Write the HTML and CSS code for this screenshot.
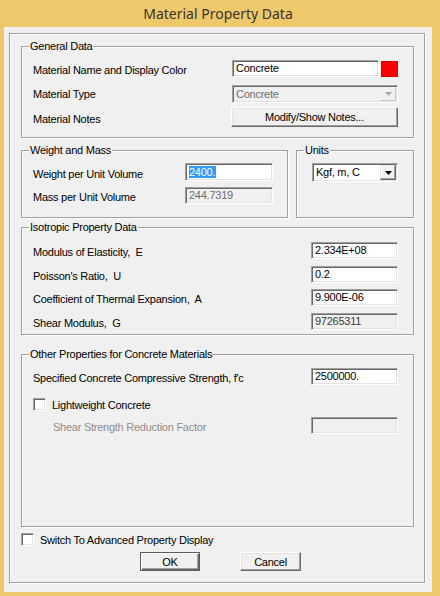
FILE: index.html
```html
<!DOCTYPE html>
<html>
<head>
<meta charset="utf-8">
<title>Material Property Data</title>
<link rel="stylesheet" href="styles.css">
</head>
<body>
<div class="window">
  <div class="titlebar">Material Property Data</div>
  <div class="client">
    <div class="frame">

      <fieldset class="group">
        <legend>General Data</legend>
        <div class="gbody general">
          <div class="row h17 mb8">
            <span class="lbl">Material Name and Display Color</span>
            <div class="namewrap">
              <div class="edit name-edit">Concrete</div>
              <div class="swatch"></div>
            </div>
          </div>
          <div class="row h18 mb4">
            <span class="lbl flat">Material Type</span>
            <div class="combo disabled w166">
              <span class="ctext">Concrete</span>
              <span class="cbtn"><svg width="7" height="4" viewBox="0 0 7 4"><path d="M0 0h7L3.5 4z" fill="#a8a8a8"/></svg></span>
            </div>
          </div>
          <div class="row h20">
            <span class="lbl">Material Notes</span>
            <div class="button w167">Modify/Show Notes...</div>
          </div>
        </div>
      </fieldset>

      <div class="pair">
        <fieldset class="group weight">
          <legend>Weight and Mass</legend>
          <div class="gbody wbody">
            <div class="row h18 mb6">
              <span class="lbl">Weight per Unit Volume</span>
              <div class="edit w88 hh18"><span class="sel">2400.</span></div>
            </div>
            <div class="row h17">
              <span class="lbl">Mass per Unit Volume</span>
              <div class="edit w88 off">244.7319</div>
            </div>
          </div>
        </fieldset>
        <fieldset class="group units">
          <legend>Units</legend>
          <div class="gbody ubody">
            <div class="combo units-combo">
              <span class="ctext">Kgf, m, C</span>
              <span class="cbtn raised"><svg width="7" height="4" viewBox="0 0 7 4"><path d="M0 0h7L3.5 4z" fill="#000"/></svg></span>
            </div>
          </div>
        </fieldset>
      </div>

      <fieldset class="group iso">
        <legend>Isotropic Property Data</legend>
        <div class="gbody isobody">
          <div class="row h17 mb7">
            <span class="lbl">Modulus of Elasticity,&nbsp; E</span>
            <div class="edit w87">2.334E+08</div>
          </div>
          <div class="row h17 mb6">
            <span class="lbl">Poisson's Ratio,&nbsp; U</span>
            <div class="edit w87">0.2</div>
          </div>
          <div class="row h17 mb7">
            <span class="lbl">Coefficient of Thermal Expansion,&nbsp; A</span>
            <div class="edit w87">9.900E-06</div>
          </div>
          <div class="row h17">
            <span class="lbl">Shear Modulus,&nbsp; G</span>
            <div class="edit w87 ro">97265311</div>
          </div>
        </div>
      </fieldset>

      <fieldset class="group other">
        <legend>Other Properties for Concrete Materials</legend>
        <div class="gbody otherbody">
          <div class="row h17 mb13">
            <span class="lbl">Specified Concrete Compressive Strength, f'c</span>
            <div class="edit w87">2500000.</div>
          </div>
          <div class="checkrow mb6">
            <span class="chk"></span>
            <span class="clbl">Lightweight Concrete</span>
          </div>
          <div class="row h17">
            <span class="lbl dim indent">Shear Strength Reduction Factor</span>
            <div class="edit w87 off"></div>
          </div>
        </div>
      </fieldset>

      <div class="checkrow switch">
        <span class="chk"></span>
        <span class="clbl">Switch To Advanced Property Display</span>
      </div>

      <div class="buttons">
        <div class="button default ok">OK</div>
        <div class="button cancel">Cancel</div>
      </div>

    </div>
  </div>
</div>
</body>
</html>
```
FILE: styles.css
```css
* { box-sizing: border-box; }
html, body { margin: 0; padding: 0; }
body {
  width: 440px;
  height: 596px;
  overflow: hidden;
  font-family: "Liberation Sans", Arial, sans-serif;
  font-size: 11px;
  letter-spacing: -0.25px;
  color: #000;
}
.window {
  width: 440px;
  height: 596px;
  background: #f0c86c;
  padding: 0 8px 4px 4px;
}
.titlebar {
  height: 27px;
  line-height: 27px;
  text-align: center;
  font-family: "Noto Sans", "Open Sans", sans-serif;
  font-size: 14px;
  letter-spacing: 0;
  color: #3b3326;
}
.client {
  height: 565px;
  background: #f0f0f0;
  padding: 6px 7px 9px 5px;
}
.frame {
  border: 1px solid #a0a0a0;
  box-shadow: 1px 1px 0 #fff, inset 1px 1px 0 #fff;
  padding: 0 10px 11px 11px;
}
.group {
  margin: 6px 0 0 0;
  padding: 0;
  min-width: 0;
  border: 1px solid #a0a0a0;
  box-shadow: 1px 1px 0 #fff, inset 1px 1px 0 #fff;
}
.group legend {
  margin-left: 7px;
  padding: 0 1px;
  height: 13px;
  line-height: 13px;
  background: #f0f0f0;
  white-space: nowrap;
}
.gbody { padding: 7px 15px 10px 11px; }
.pair { display: flex; gap: 8px; margin-top: 6px; }
.pair .group { margin-top: 0; }
.weight { width: 267px; flex: none; }
.units { flex: 1; }
.wbody { padding: 6px 14px 13px 11px; }
.ubody { padding: 6px 15px 0 15px; }
.iso { margin-top: 3px; }
.isobody { padding: 8px 15px 4px 11px; }
.other { margin-top: 13px; }
.otherbody { padding: 7px 15px 92px 11px; }

.row {
  display: flex;
  align-items: center;
  justify-content: space-between;
}
.h17 { height: 17px; }
.h18 { height: 18px; }
.h20 { height: 20px; }
.mb4 { margin-bottom: 4px; }
.mb6 { margin-bottom: 6px; }
.mb7 { margin-bottom: 7px; }
.mb8 { margin-bottom: 8px; }
.mb13 { margin-bottom: 13px; }
.lbl {
  white-space: nowrap;
  line-height: 13px;
  padding-top: 4px;
}
.lbl.flat { padding-top: 0; }
.dim { color: #8d8d8d; }
.indent { padding-left: 20px; }

.edit {
  height: 17px;
  border: 1px solid;
  border-color: #a0a0a0 #ffffff #ffffff #a0a0a0;
  box-shadow: inset 1px 1px 0 #696969, inset -1px -1px 0 #e3e3e3;
  background: #fff;
  padding: 0 2px 0 3px;
  line-height: 15px;
  white-space: nowrap;
  overflow: hidden;
}
.hh18 { height: 18px; line-height: 16px; }
.edit.off { background: #f0f0f0; color: #6d6d6d; }
.edit.ro { background: #f0f0f0; color: #3a3a3a; }
.sel { background: #3399ff; color: #fff; padding: 0 1px 0 0; }
.w87 { width: 87px; }
.w88 { width: 88px; }
.w166 { width: 166px; }
.w167 { width: 167px; }

.namewrap { display: flex; align-items: center; gap: 2px; width: 166px; height: 17px; }
.name-edit { width: 147px; }
.swatch { width: 17px; height: 16px; background: #ff0000; border: 1px solid #e00000; }

.combo {
  display: flex;
  border: 1px solid;
  border-color: #a0a0a0 #ffffff #ffffff #a0a0a0;
  box-shadow: inset 1px 1px 0 #696969, inset -1px -1px 0 #e3e3e3;
  background: #fff;
  padding: 1px;
  height: 18px;
}
.combo .ctext {
  flex: 1;
  padding-left: 2px;
  line-height: 14px;
  white-space: nowrap;
  overflow: hidden;
}
.combo .cbtn {
  width: 16px;
  display: flex;
  align-items: center;
  justify-content: center;
  background: #f0f0f0;
  border: 1px solid;
  border-color: #f4f4f4 #c8c8c8 #c8c8c8 #f4f4f4;
}
.combo.disabled { background: #f0f0f0; color: #6d6d6d; }
.units-combo { height: 19px; width: 86px; }
.units-combo .ctext { line-height: 15px; }
.cbtn.raised {
  border-color: #e3e3e3 #696969 #696969 #e3e3e3;
  box-shadow: inset -1px -1px 0 #a0a0a0, inset 1px 1px 0 #fff;
}

.button {
  display: flex;
  align-items: center;
  justify-content: center;
  background: #f0f0f0;
  border: 1px solid;
  border-color: #ffffff #696969 #696969 #ffffff;
  box-shadow: inset -1px -1px 0 #a0a0a0, inset 1px 1px 0 #e3e3e3;
  white-space: nowrap;
  height: 20px;
}
.button.default {
  border-color: #5a5a5a;
  box-shadow: inset 1px 1px 0 #fff, inset -1px -1px 0 #696969, inset -2px -2px 0 #a0a0a0;
}

.checkrow { display: flex; align-items: center; height: 13px; }
.chk {
  width: 13px;
  height: 13px;
  flex: none;
  background: #fff;
  border: 1px solid;
  border-color: #a0a0a0 #ffffff #ffffff #a0a0a0;
  box-shadow: inset 1px 1px 0 #696969, inset -1px -1px 0 #e3e3e3;
}
.clbl { margin-left: 6px; white-space: nowrap; line-height: 13px; padding-top: 1px; }
.switch { margin-top: 6px; }

.buttons { display: flex; gap: 40px; margin: 6px 0 0 119px; }
.ok { width: 60px; height: 19px; }
.cancel { width: 61px; height: 19px; }
```
